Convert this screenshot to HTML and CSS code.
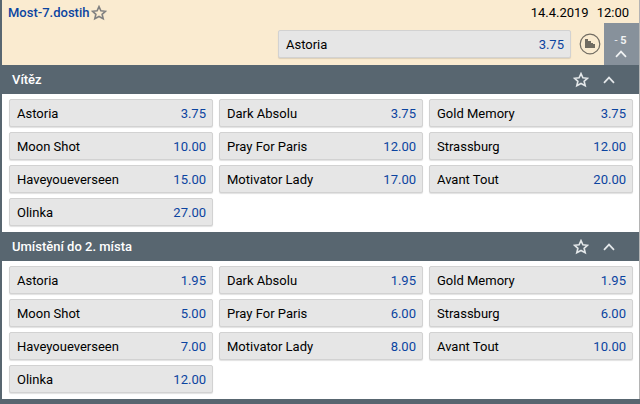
FILE: index.html
```html
<!DOCTYPE html>
<html lang="cs">
<head>
<meta charset="utf-8">
<title>Most-7.dostih</title>
<link rel="stylesheet" href="styles.css">
</head>
<body>
<svg class="defs" aria-hidden="true">
  <symbol id="star" viewBox="0 0 16 16"><path d="M8 1.6 L9.9 5.8 L14.4 6.3 L11.1 9.3 L12.2 13.8 L8 11.5 L3.8 13.8 L4.9 9.3 L1.6 6.3 L6.1 5.8 Z" fill="none" stroke="currentColor" stroke-width="1.6"/></symbol>
  <symbol id="chevron" viewBox="0 0 12 8"><path d="M1 6.8 L6 1.6 L11 6.8" fill="none" stroke="currentColor" stroke-width="1.7"/></symbol>
</svg>
<main class="event">
  <header class="event-head">
    <div class="event-info">
      <a class="event-name" href="#">Most-7.dostih</a>
      <button class="icon-button event-star" aria-label="Oblíbené"><svg class="star"><use href="#star"/></svg></button>
      <time class="event-time" datetime="2019-04-14T12:00"><span>14.4.2019</span><span>12:00</span></time>
    </div>
    <div class="event-bar">
      <button class="bet bet-main"><span>Astoria</span><span class="odds">3.75</span></button>
      <button class="icon-button stats" aria-label="Statistiky"><svg class="stats-icon" viewBox="0 0 22 22"><circle cx="11" cy="11" r="9.8" fill="none" stroke="currentColor" stroke-width="1.2"/><path d="M6 6h3v2h3v2h2v1h2v4H6z" fill="currentColor"/></svg></button>
      <button class="more"><span>- <b>5</b></span><svg class="chevron"><use href="#chevron"/></svg></button>
    </div>
  </header>

  <section>
    <div class="market-head">
      <h2>Vítěz</h2>
      <button class="icon-button" aria-label="Oblíbené"><svg class="star"><use href="#star"/></svg></button>
      <button class="icon-button" aria-label="Sbalit"><svg class="chevron"><use href="#chevron"/></svg></button>
    </div>
    <div class="bets">
      <button class="bet"><span>Astoria</span><span class="odds">3.75</span></button>
      <button class="bet"><span>Dark Absolu</span><span class="odds">3.75</span></button>
      <button class="bet"><span>Gold Memory</span><span class="odds">3.75</span></button>
      <button class="bet"><span>Moon Shot</span><span class="odds">10.00</span></button>
      <button class="bet"><span>Pray For Paris</span><span class="odds">12.00</span></button>
      <button class="bet"><span>Strassburg</span><span class="odds">12.00</span></button>
      <button class="bet"><span>Haveyoueverseen</span><span class="odds">15.00</span></button>
      <button class="bet"><span>Motivator Lady</span><span class="odds">17.00</span></button>
      <button class="bet"><span>Avant Tout</span><span class="odds">20.00</span></button>
      <button class="bet"><span>Olinka</span><span class="odds">27.00</span></button>
    </div>
  </section>

  <section>
    <div class="market-head">
      <h2>Umístění do 2. místa</h2>
      <button class="icon-button" aria-label="Oblíbené"><svg class="star"><use href="#star"/></svg></button>
      <button class="icon-button" aria-label="Sbalit"><svg class="chevron"><use href="#chevron"/></svg></button>
    </div>
    <div class="bets">
      <button class="bet"><span>Astoria</span><span class="odds">1.95</span></button>
      <button class="bet"><span>Dark Absolu</span><span class="odds">1.95</span></button>
      <button class="bet"><span>Gold Memory</span><span class="odds">1.95</span></button>
      <button class="bet"><span>Moon Shot</span><span class="odds">5.00</span></button>
      <button class="bet"><span>Pray For Paris</span><span class="odds">6.00</span></button>
      <button class="bet"><span>Strassburg</span><span class="odds">6.00</span></button>
      <button class="bet"><span>Haveyoueverseen</span><span class="odds">7.00</span></button>
      <button class="bet"><span>Motivator Lady</span><span class="odds">8.00</span></button>
      <button class="bet"><span>Avant Tout</span><span class="odds">10.00</span></button>
      <button class="bet"><span>Olinka</span><span class="odds">12.00</span></button>
    </div>
  </section>
</main>
</body>
</html>
```
FILE: styles.css
```css
* { box-sizing: border-box; }

body {
  margin: 0;
  background: #586670;
  color: #000;
  font: 13px/16px Roboto, "Liberation Sans", sans-serif;
}

button {
  margin: 0;
  border: 0;
  background: none;
  color: inherit;
  font: inherit;
  cursor: pointer;
}

svg { display: block; }
.defs { display: none; }
.star { width: 16px; height: 16px; }
.chevron { width: 12px; height: 8px; }

.event {
  margin-left: 2px;
  border-right: 1px solid #b4b4b4;
}

.event-head { background: #faebd0; }

.event-info {
  display: flex;
  align-items: center;
  height: 23px;
  padding: 2px 10px 0 6px;
}

.event-name {
  color: #0b44a0;
  font-weight: 500;
  text-decoration: none;
}

.icon-button {
  display: flex;
  align-items: center;
  justify-content: center;
  padding: 0;
}

.event-star {
  margin-left: 2px;
  color: #808080;
}

.event-time {
  display: flex;
  gap: 8px;
  margin-left: auto;
}

.event-bar {
  display: flex;
  justify-content: flex-end;
  height: 42px;
}

.stats {
  width: 33px;
  padding-left: 4px;
  color: #716c62;
}

.stats-icon { width: 22px; height: 22px; }

.more {
  display: flex;
  flex-direction: column;
  align-items: center;
  gap: 1px;
  width: 35px;
  padding: 10px 2px 0 0;
  background: #87919b;
  color: #f0f2f3;
  font-size: 11px;
}

.market-head {
  display: flex;
  align-items: center;
  gap: 14px;
  height: 29px;
  padding: 0 24px 0 10px;
  background: #586670;
  color: #e4e8ea;
}

.market-head h2 {
  flex: 1;
  margin: 0;
  color: #fff;
  font-size: 13px;
  font-weight: 500;
}

.bets {
  display: grid;
  grid-template-columns: repeat(3, 1fr);
  gap: 5px 6px;
  padding: 5px 6px 6px 7px;
  background: #fff;
}

.bet {
  display: flex;
  align-items: center;
  justify-content: space-between;
  height: 28px;
  padding: 2px 6px 0 7px;
  border: 1px solid #d2d2d2;
  border-radius: 2px;
  background: #e6e6e6;
  box-shadow: 0 1px 1px rgba(0, 0, 0, 0.12);
}

.bet-main {
  flex: 0 0 46%;
  margin-top: 7px;
}

.odds { color: #0b44a0; }
```
